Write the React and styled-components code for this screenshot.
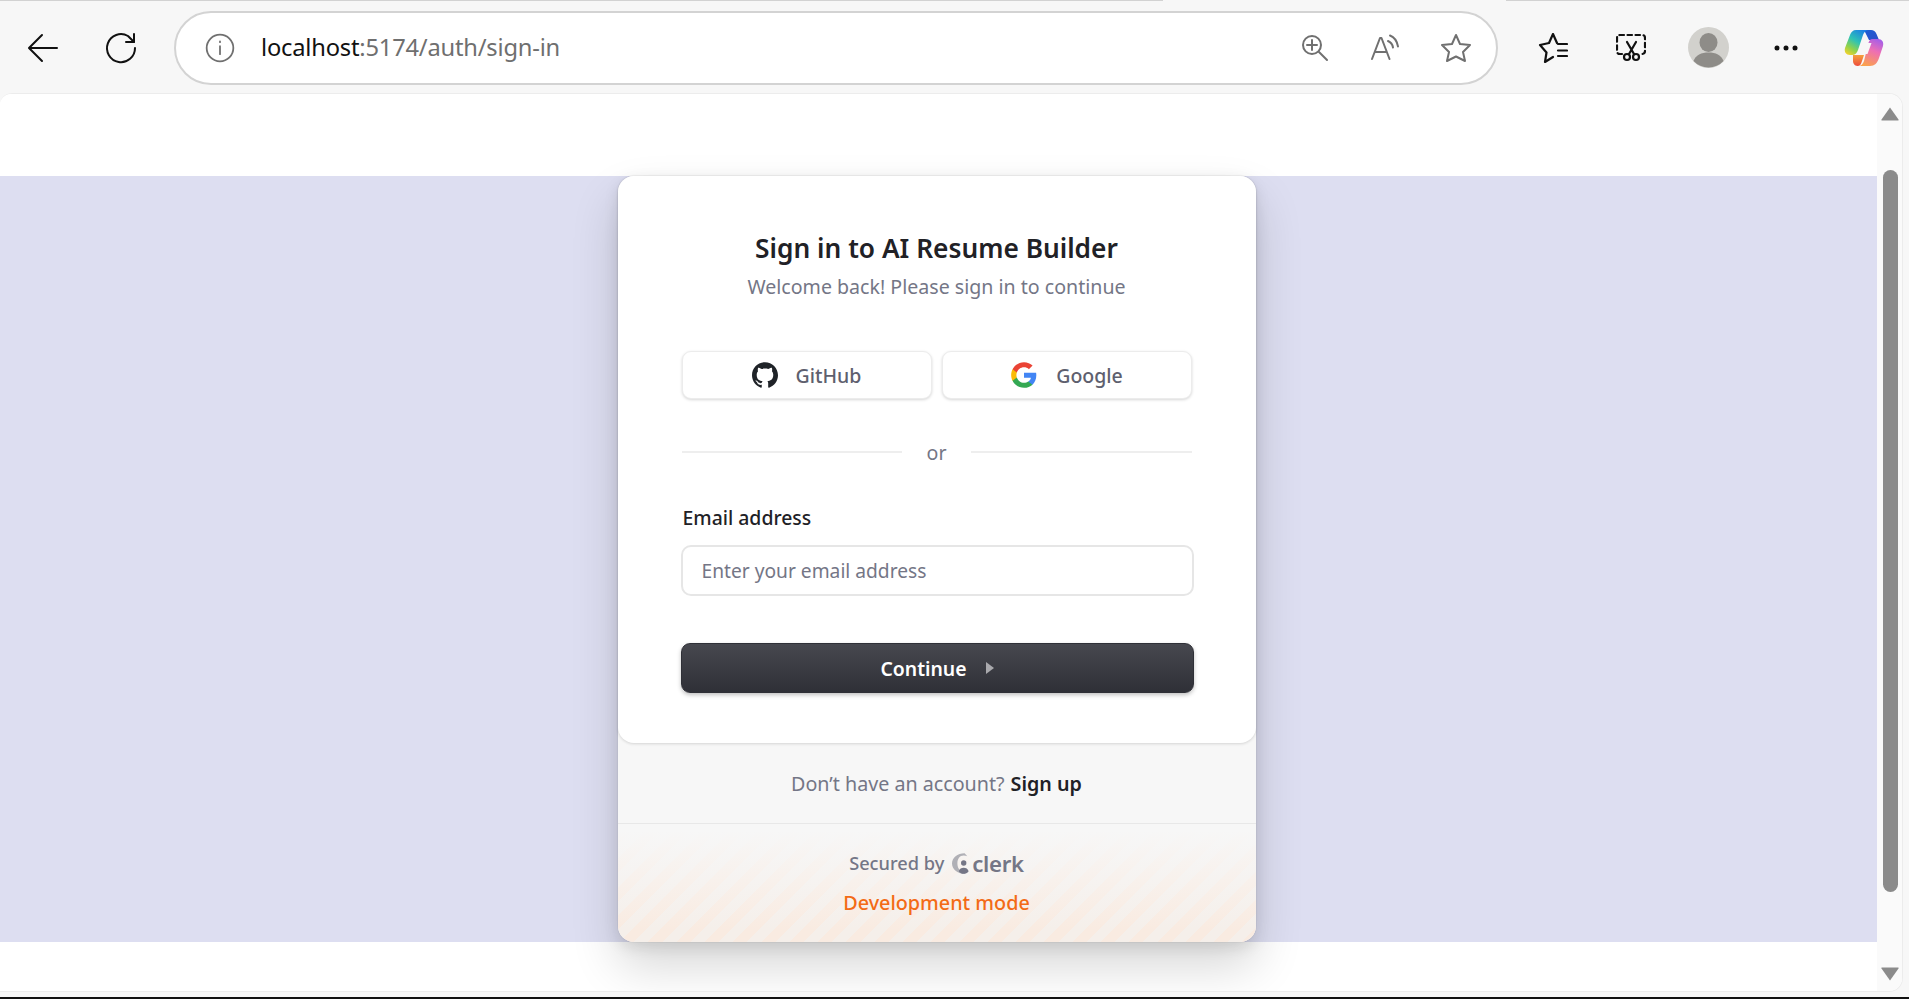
import React from 'react'
import styled, { createGlobalStyle } from 'styled-components'

const Global = createGlobalStyle`
    * { box-sizing: border-box; }
    html, body { margin: 0; height: 100%; overflow: hidden; background: #f7f7f7; }
    body { font-family: "Noto Sans", "Open Sans", Arial, sans-serif; }
    #root { height: 100%; }
`

const Screen = styled.div`
    height: 999px;
    display: flex;
    flex-direction: column;
    background: #f7f7f7;
    border-bottom: 2px solid #111;
`

/* browser toolbar */
const Toolbar = styled.header`
    height: 93px;
    flex: none;
    display: flex;
    align-items: center;
    gap: 34px;
    padding: 2px 0 0 21px;
    background: linear-gradient(to right, #d2d2d2 1163px, #f7f7f7 1163px 1506px, #d2d2d2 1506px) top / 100% 1px no-repeat;
`

const Slot = styled.button`
    width: ${p => p.$w || 44}px;
    height: 44px;
    flex: none;
    margin-left: ${p => p.$shift || 0}px;
    padding: 0;
    border: 0;
    background: none;
    display: flex;
    align-items: center;
    justify-content: center;
`

const Address = styled.div`
    width: 1324px;
    height: 74px;
    flex: none;
    margin-left: -3px;
    display: flex;
    align-items: center;
    padding: 0 20px 0 28px;
    background: #fff;
    border: 2px solid #d3d3d3;
    border-radius: 37px;
`

const Url = styled.div`
    margin: -2px 0 0 25px;
    font-size: 23.7px;
    letter-spacing: -0.2px;
    color: #111;
    span { color: #6f6f6f; }
`

const AddressTools = styled.div`
    margin-left: auto;
    display: flex;
    align-items: center;
    gap: 31px;
`

/* page */
const Viewport = styled.main`
    flex: 1;
    margin-right: 6px;
    margin-bottom: 5px;
    display: flex;
    background: #fff;
    border: 1px solid #ececec;
    border-left: 0;
    border-radius: 12px 14px 14px 0;
    overflow: hidden;
`

const Page = styled.div`
    flex: 1;
    display: flex;
    flex-direction: column;
    background: #fff;
`

const TopGap = styled.div`
    height: 82px;
    flex: none;
`

const Band = styled.section`
    height: 766px;
    flex: none;
    display: flex;
    justify-content: center;
    background: #dddef1;
    padding-right: 4px;
`

const Scrollbar = styled.aside`
    width: 25px;
    flex: none;
    display: flex;
    flex-direction: column;
    align-items: center;
    background: #fafafa;
    padding: 13px 0 10px 1px;
`

const Thumb = styled.div`
    width: 15px;
    flex: 1;
    margin: 49px 0 75px;
    background: #8b8b8b;
    border-radius: 8px;
`

/* clerk card */
const Card = styled.div`
    width: 638px;
    height: 766px;
    display: flex;
    flex-direction: column;
    background: #f7f7f7;
    border-radius: 16px;
    box-shadow: 0 24px 48px rgba(0, 0, 0, 0.16), 0 5px 15px rgba(0, 0, 0, 0.1), 0 0 0 1px rgba(0, 0, 0, 0.03);
`

const Panel = styled.div`
    flex: none;
    height: 567px;
    padding: 55px 64px 50px;
    display: flex;
    flex-direction: column;
    background: #fff;
    border-radius: 16px;
    box-shadow: 0 1px 3px rgba(0, 0, 0, 0.14);
`

const Title = styled.h1`
    margin: 0;
    font-size: 26.3px;
    line-height: 34px;
    font-weight: 600;
    text-align: center;
    color: #212126;
`

const Subtitle = styled.p`
    margin: 8px 0 0;
    font-size: 19.6px;
    line-height: 28px;
    text-align: center;
    color: #747686;
`

const Socials = styled.div`
    margin-top: 50px;
    display: grid;
    grid-template-columns: 250px 250px;
    justify-content: space-between;
`

const SocialButton = styled.button`
    height: 48px;
    display: flex;
    align-items: center;
    justify-content: center;
    gap: 18px;
    padding: 0;
    font-family: inherit;
    font-size: 19.5px;
    font-weight: 500;
    color: #5e5f6e;
    background: #fff;
    border: 1px solid #ececec;
    border-radius: 9px;
    box-shadow: 0 1px 3px rgba(0, 0, 0, 0.16);
`

const Divider = styled.div`
    margin-top: 39px;
    height: 28px;
    display: flex;
    align-items: center;
    gap: 25px;
    font-size: 19.6px;
    color: #747686;

    &::before, &::after {
        content: '';
        flex: 1;
        height: 2px;
        background: #eeeeee;
    }
`

const Label = styled.label`
    margin-top: 39px;
    padding-left: 1px;
    font-size: 19.4px;
    line-height: 26px;
    font-weight: 500;
    color: #212126;
`

const Input = styled.input`
    width: 513px;
    height: 51px;
    flex: none;
    margin: 14px 0 0 -1px;
    padding: 0 19px;
    font-family: inherit;
    font-size: 19.2px;
    color: #212126;
    background: #fff;
    border: 2px solid #e6e6e6;
    border-radius: 10px;
    outline: none;

    &::placeholder { color: #747686; opacity: 1; }
`

const Continue = styled.button`
    width: 513px;
    height: 50px;
    flex: none;
    margin: 47px 0 0 -1px;
    display: flex;
    align-items: center;
    justify-content: center;
    gap: 19px;
    padding: 0;
    font-family: inherit;
    font-size: 19.4px;
    font-weight: 600;
    color: #fff;
    background: linear-gradient(to bottom, #47484f, #2f3037);
    border: 1px solid #2f3037;
    border-radius: 9px;
    box-shadow: 0 2px 4px rgba(0, 0, 0, 0.25);
`

const SignUpRow = styled.div`
    height: 81px;
    flex: none;
    display: flex;
    align-items: center;
    justify-content: center;
    gap: 6px;
    font-size: 19.7px;
    color: #747686;
    border-bottom: 1px solid #e8e8e8;

    a { color: #212126; font-weight: 600; }
`

const DevFooter = styled.div`
    flex: 1;
    display: flex;
    flex-direction: column;
    align-items: center;
    gap: 14px;
    padding-top: 26px;
    border-radius: 0 0 16px 16px;
    background:
        linear-gradient(to bottom, #f7f7f7 5%, rgba(247, 247, 247, 0) 90%),
        repeating-linear-gradient(-45deg, #f9ebe1 0 10px, #f5efea 10px 20px);
`

const SecuredBy = styled.div`
    height: 26px;
    display: flex;
    align-items: center;
    gap: 8px;
    font-size: 18.2px;
    font-weight: 500;
    color: #747686;
`

const ClerkMark = styled.span`
    display: flex;
    align-items: center;
    gap: 2px;
    font-size: 22.2px;
    font-weight: 600;
    letter-spacing: -0.3px;
    color: #747686;
`

const DevMode = styled.div`
    font-size: 19.8px;
    line-height: 26px;
    font-weight: 500;
    color: #f36b16;
`

const Stroke = ({ size = 36, box = 36, sw = 2, color = '#111', children }) => (
    <svg width={size} height={size} viewBox={`0 0 ${box} ${box}`} fill="none" stroke={color} strokeWidth={sw} strokeLinecap="round" strokeLinejoin="round">
        {children}
    </svg>
)

const Copilot = () => (
    <svg width="40" height="38" viewBox="0 0 40 38">
        <defs>
            <linearGradient id="cpA" x1="0.75" y1="0" x2="0.15" y2="1">
                <stop offset="0" stopColor="#1b7fe6" />
                <stop offset="0.45" stopColor="#2fc3b4" />
                <stop offset="0.75" stopColor="#8fd24c" />
                <stop offset="1" stopColor="#f2d22c" />
            </linearGradient>
            <linearGradient id="cpB" x1="0" y1="0" x2="1" y2="1">
                <stop offset="0" stopColor="#1c5fd4" />
                <stop offset="1" stopColor="#2f4fc8" />
            </linearGradient>
            <linearGradient id="cpC" x1="0.7" y1="0" x2="0.3" y2="1">
                <stop offset="0" stopColor="#a95fe6" />
                <stop offset="0.4" stopColor="#ee6fb4" />
                <stop offset="1" stopColor="#fba34a" />
            </linearGradient>
            <linearGradient id="cpD" x1="0.5" y1="0" x2="0.5" y2="1">
                <stop offset="0" stopColor="#f4a03c" />
                <stop offset="1" stopColor="#ee4c3c" />
            </linearGradient>
        </defs>
        <path fill="url(#cpB)" d="M20 1h7c2.500 0 4.500 1.500 5.500 4l2.500 6H25z" />
        <path fill="url(#cpD)" d="M9 26h11l-2 6c-.8 3-2 5-4.500 5-3 0-4.500-3-4.500-5z" />
        <path fill="url(#cpA)" d="M12 1h13c-3 0-5 2-6 5l-5 15c-1 3-3 5-6 5H6c-4 0-6-3-5-7L6 6c1-3 3-5 6-5z" />
        <path fill="url(#cpC)" d="M28 10h6c4 0 6 3 5 7l-4 12c-1.500 5-4.500 8-9 8H14c3 0 5-2 6-5l4-16c.5-3.500 2-6 4-6z" />
        <path fill="#f7f7f7" d="M20 14h7.500l-4 11H16z" />
    </svg>
)

const App = () => (
    <Screen>
        <Global />
        <Toolbar>
            <Slot>
                <Stroke>
                    <path d="M32 18H5M17 5L4 18l13 13" />
                </Stroke>
            </Slot>
            <Slot>
                <Stroke>
                    <path d="M31 12l-6-6A14 14 0 1 0 32 18" />
                    <path d="M31 4v8h-8" />
                </Stroke>
            </Slot>
            <Address>
                <Slot $w={32}>
                    <Stroke size={32} color="#707070">
                        <circle cx="18" cy="18" r="15" />
                        <path d="M18 16v9M18 10.500v1" />
                    </Stroke>
                </Slot>
                <Url>localhost<span>:5174/auth/sign-in</span></Url>
                <AddressTools>
                    <Slot $w={40}>
                        <Stroke size={30} box={30} color="#707070">
                            <circle cx="13" cy="12" r="9" />
                            <path d="M13 7v10M8 12h10M20 19l8 8" />
                        </Stroke>
                    </Slot>
                    <Slot $w={40}>
                        <Stroke size={30} box={30} color="#707070">
                            <path d="M2 26L10 5h1.500l8 21M5 19h11.500" />
                            <path d="M18 8c2.500 1 4.500 3.500 5 6.500M20 2.500c4 1.500 7 5.500 8 11" />
                        </Stroke>
                    </Slot>
                    <Slot $w={40}>
                        <Stroke size={30} box={30} color="#707070">
                            <path d="M15 2l4 9 10 1-7 7 2 9-9-4.500L6 28l2-9-7-7 10-1z" />
                        </Stroke>
                    </Slot>
                </AddressTools>
            </Address>
            <Slot $shift={-1}>
                <Stroke size={30} box={30} sw={2.200}>
                    <path d="M19 10L15 1l-4 9-9 2 6.500 7.500L7 29l8-5" />
                    <path d="M20 11h9M20 17.500h9M20 23h9" />
                </Stroke>
            </Slot>
            <Slot>
                <Stroke size={30} box={30} sw={2.200}>
                    <path strokeDasharray="4.500 3.500" d="M6 21H4c-2 0-3-1-3-3V5c0-2 1-3 3-3h22c2 0 3 1 3 3v13c0 2-1 3-3 3h-2" />
                    <path d="M11 9l7 12M20 9l-7 12" />
                    <circle cx="11" cy="24" r="3" />
                    <circle cx="20" cy="24" r="3" />
                </Stroke>
            </Slot>
            <Slot $shift={-1}>
                <svg width="41" height="41" viewBox="0 0 41 41">
                    <circle cx="20.500" cy="20.500" r="20.500" fill="#d2d1cd" />
                    <ellipse cx="20.500" cy="15.500" rx="9" ry="9.500" fill="#8e8c88" />
                    <path fill="#8e8c88" d="M5.500 34c2-6 8-8.500 15-8.500s13 2.500 15 8.500a20.500 20.500 0 0 1-30 0z" />
                </svg>
            </Slot>
            <Slot>
                <svg width="24" height="6" viewBox="0 0 24 6" fill="#111">
                    <circle cx="3" cy="3" r="2.500" />
                    <circle cx="12" cy="3" r="2.500" />
                    <circle cx="21" cy="3" r="2.500" />
                </svg>
            </Slot>
            <Slot>
                <Copilot />
            </Slot>
        </Toolbar>
        <Viewport>
            <Page>
                <TopGap />
                <Band>
                    <Card>
                        <Panel>
                            <Title>Sign in to AI Resume Builder</Title>
                            <Subtitle>Welcome back! Please sign in to continue</Subtitle>
                            <Socials>
                                <SocialButton>
                                    <svg width="26" height="26" viewBox="0 0 24 24" fill="#1f2328">
                                        <path d="M12 .297c-6.630 0-12 5.373-12 12 0 5.303 3.438 9.800 8.205 11.385.6.113.82-.258.82-.577 0-.285-.01-1.040-.015-2.040-3.338.724-4.042-1.610-4.042-1.610C4.422 18.070 3.633 17.700 3.633 17.700c-1.087-.744.084-.729.084-.729 1.205.084 1.838 1.236 1.838 1.236 1.070 1.835 2.809 1.305 3.495.998.108-.776.417-1.305.760-1.605-2.665-.3-5.466-1.332-5.466-5.930 0-1.310.465-2.380 1.235-3.220-.135-.303-.54-1.523.105-3.176 0 0 1.005-.322 3.300 1.230.960-.267 1.980-.399 3-.405 1.020.006 2.040.138 3 .405 2.280-1.552 3.285-1.230 3.285-1.230.645 1.653.240 2.873.120 3.176.765.840 1.230 1.910 1.230 3.220 0 4.610-2.805 5.625-5.475 5.920.420.360.810 1.096.810 2.220 0 1.606-.015 2.896-.015 3.286 0 .315.210.690.825.570C20.565 22.092 24 17.592 24 12.297c0-6.627-5.373-12-12-12" />
                                    </svg>
                                    GitHub
                                </SocialButton>
                                <SocialButton>
                                    <svg width="28" height="28" viewBox="0 0 24 24">
                                        <path fill="#4285F4" d="M22.560 12.250c0-.78-.07-1.530-.2-2.250H12v4.260h5.920c-.26 1.370-1.040 2.530-2.210 3.310v2.770h3.570c2.080-1.920 3.280-4.740 3.280-8.090z" />
                                        <path fill="#34A853" d="M12 23c2.970 0 5.460-.98 7.280-2.660l-3.570-2.770c-.98.660-2.230 1.060-3.710 1.060-2.860 0-5.290-1.930-6.160-4.530H2.180v2.840C3.990 20.530 7.700 23 12 23z" />
                                        <path fill="#FBBC05" d="M5.840 14.090c-.22-.66-.35-1.360-.35-2.090s.13-1.430.35-2.090V7.070H2.180C1.430 8.550 1 10.220 1 12s.43 3.450 1.180 4.930l2.850-2.220.81-.62z" />
                                        <path fill="#EA4335" d="M12 5.380c1.620 0 3.060.56 4.210 1.640l3.150-3.150C17.450 2.090 14.970 1 12 1 7.700 1 3.990 3.470 2.180 7.070l3.660 2.840c.87-2.600 3.300-4.530 6.160-4.530z" />
                                    </svg>
                                    Google
                                </SocialButton>
                            </Socials>
                            <Divider>or</Divider>
                            <Label>Email address</Label>
                            <Input placeholder="Enter your email address" />
                            <Continue>
                                Continue
                                <svg width="8" height="12" viewBox="0 0 8 12" fill="#a9a9ad">
                                    <path d="M0 0l8 6-8 6z" />
                                </svg>
                            </Continue>
                        </Panel>
                        <SignUpRow>
                            Don’t have an account? <a>Sign up</a>
                        </SignUpRow>
                        <DevFooter>
                            <SecuredBy>
                                Secured by
                                <ClerkMark>
                                    <svg width="18" height="21" viewBox="0 0 20 23">
                                        <path fill="#b0b0b6" d="M14 0l3 3.500c-1-.5-2.500-.8-4-.8C8.500 2.700 6 6.500 6 11.500s2.500 8.500 7 8.800c1.500 0 3-.3 4-.8L14 23C6 23 0 18 0 11.500S6 0 14 0z" />
                                        <circle cx="13" cy="11" r="3" fill="#747686" />
                                        <path fill="#747686" d="M7.500 20c.8-2.500 3-3.800 5.500-3.800s4.700 1.300 5.500 3.800c-1.500 2-3.500 3-5.500 3s-4-1-5.500-3z" />
                                    </svg>
                                    clerk
                                </ClerkMark>
                            </SecuredBy>
                            <DevMode>Development mode</DevMode>
                        </DevFooter>
                    </Card>
                </Band>
            </Page>
            <Scrollbar>
                <svg width="18" height="14" viewBox="0 0 18 14" fill="#8b8b8b">
                    <path d="M9 0.500l8.500 12c.3.500 0 1-.5 1H1c-.5 0-.8-.5-.5-1z" />
                </svg>
                <Thumb />
                <svg width="18" height="14" viewBox="0 0 18 14" fill="#8b8b8b">
                    <path d="M9 13.500l8.500-12c.3-.5 0-1-.5-1H1c-.5 0-.8.5-.5 1z" />
                </svg>
            </Scrollbar>
        </Viewport>
    </Screen>
)

export default App
